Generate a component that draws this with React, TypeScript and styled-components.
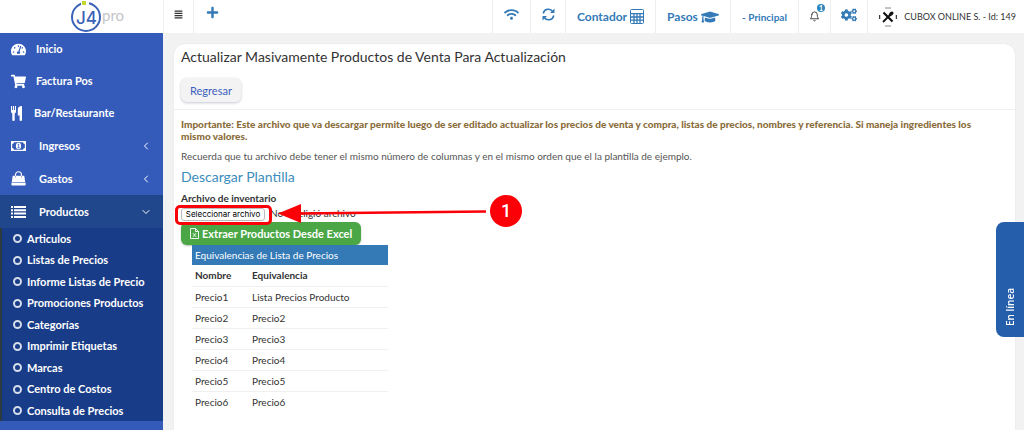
import React, { useRef } from "react";
import styled, { createGlobalStyle } from "styled-components";
import { FaWifi, FaGraduationCap, FaCogs, FaShoppingCart, FaTachometerAlt, FaAlignJustify, FaPlus, FaStar } from "react-icons/fa";
import { LuChevronLeft, LuChevronDown, LuBell } from "react-icons/lu";

const GlobalStyle = createGlobalStyle`
  *, *::before, *::after { box-sizing: border-box; }
  body {
    margin: 0;
    background: #f2f2f2;
    color: #333;
    font-family: Lato, "Noto Sans", sans-serif;
    font-size: 10px;
    line-height: 12px;
  }
  button, input { font-family: inherit; }
  h1, h2, p, ul { margin: 0; padding: 0; }
  ul { list-style: none; }
  a { text-decoration: none; color: inherit; }
`;

const Page = styled.div`
  display: grid;
  grid-template-columns: 163px minmax(0, 1fr);
  grid-template-rows: 33px minmax(0, 1fr);
  height: 100vh;
  overflow: hidden;
`;

const Brand = styled.a`
  display: flex;
  align-items: center;
  justify-content: center;
  background: #fff;
  padding-left: 32px;
`;

const TopBar = styled.header`
  display: flex;
  align-items: stretch;
  background: #fff;
  border-left: 1px solid #efefef;
`;

const Spacer = styled.div`
  flex: 1;
`;

const BarItem = styled.button<{ $width: number; $dark?: boolean }>`
  position: relative;
  display: flex;
  align-items: center;
  justify-content: center;
  gap: 3px;
  width: ${(p) => p.$width}px;
  padding: 0 0 4px;
  border: 0;
  border-left: 1px solid #eee;
  background: #fff;
  color: ${(p) => (p.$dark ? "#333" : "#337ab7")};
  font-size: 12px;
  font-weight: 700;
  white-space: nowrap;
`;

const FlatItem = styled(BarItem)`
  border-left: 0;
`;

const PlusItem = styled(BarItem)`
  justify-content: flex-start;
  padding: 0 0 8px 12px;
`;

const TextItem = styled(BarItem)`
  padding: 0;
`;

const SmallItem = styled(TextItem)`
  font-size: 10px;
`;

const UserItem = styled(TextItem)`
  justify-content: flex-end;
  gap: 7px;
  padding-right: 8px;
  font-size: 9px;
  font-weight: 400;
`;

const Badge = styled.span`
  position: absolute;
  top: 4px;
  right: 5px;
  width: 8px;
  height: 8px;
  border-radius: 4px;
  background: #2f86bd;
  color: #fff;
  font-size: 7px;
  line-height: 8px;
  text-align: center;
`;

const Sidebar = styled.nav`
  background: #345bb9;
  color: #fff;
  font-weight: 700;
  overflow: hidden;
`;

const MenuLink = styled.a<{ $active?: boolean; $tree?: boolean }>`
  display: flex;
  align-items: center;
  gap: ${(p) => (p.$tree ? 13 : 10)}px;
  height: ${(p) => (p.$tree ? 33 : 32)}px;
  padding: 0 11px;
  background: ${(p) => (p.$active ? "#20468c" : "transparent")};
  font-size: 11px;

  svg { flex: none; }
  svg:last-child:not(:first-child) { margin-left: auto; }
`;

const Submenu = styled.ul`
  background: #183c87;
  border-left: 2px solid #2c3b41;
`;

const SubItem = styled.li`
  height: 21px;
  &:nth-child(even) { height: 22px; }
`;

const SubLink = styled.a`
  display: flex;
  align-items: center;
  gap: 5px;
  height: 100%;
  padding-left: 11px;
  font-size: 11px;
  line-height: 20px;

  &::before {
    content: "";
    width: 9px;
    height: 9px;
    border: 2px solid #d5dcea;
    border-radius: 50%;
  }
`;

const Main = styled.main`
  padding: 11px 9px 0 11px;
  display: flex;
`;

const Card = styled.section`
  flex: 1;
  background: #fff;
  border-radius: 10px 10px 0 0;
  box-shadow: 0 0 1px #ccc;
`;

const CardHead = styled.div`
  padding: 4px 7px 7px;
  border-bottom: 1px solid #f0f0f0;
`;

const Title = styled.h1`
  margin-bottom: 12px;
  font-size: 14px;
  line-height: 18px;
  font-weight: 400;
`;

const BackButton = styled.button`
  display: block;
  height: 24px;
  padding: 0 9px;
  border: 0;
  border-radius: 6px;
  background: #f3f3f3;
  box-shadow: 0 1px 3px #c4c8d4;
  color: #3b5fbf;
  font-size: 11px;
`;

const CardBody = styled.div`
  padding: 8px 7px;
`;

const Warning = styled.p`
  color: #8a6d3b;
  font-weight: 900;
  line-height: 12px;
  padding-right: 10px;
`;

const Note = styled.p`
  margin-top: 8px;
  color: #555;
`;

const TemplateLink = styled.a`
  display: block;
  margin-top: 6px;
  color: #3c8dbc;
  font-size: 14px;
  line-height: 18px;
`;

const FieldLabel = styled.label`
  display: block;
  margin-top: 6px;
  font-weight: 700;
`;

const FilePicker = styled.div`
  position: relative;
  display: flex;
  align-items: center;
  gap: 5px;
  height: 18px;

  input { display: none; }
`;

const PickButton = styled.button`
  width: 84px;
  height: 13px;
  margin-top: 3px;
  padding: 0;
  border: 1px solid #bbb;
  border-radius: 3px;
  background: #fff;
  font-family: Inter, sans-serif;
  font-size: 8px;
  line-height: 11px;
  white-space: nowrap;
`;

const Highlight = styled.span`
  position: absolute;
  left: -6px;
  top: 1px;
  width: 97px;
  height: 20px;
  border: 3px solid #fb0007;
  border-radius: 5px;
  pointer-events: none;
`;

const Arrow = styled.svg`
  position: absolute;
  left: 97px;
  top: 0;
  pointer-events: none;
`;

const Step = styled.span`
  position: absolute;
  left: 309px;
  top: -9px;
  width: 32px;
  height: 32px;
  border-radius: 50%;
  background: #fb0007;
  color: #fff;
  font-family: Roboto, sans-serif;
  font-size: 18px;
  font-weight: 500;
  line-height: 32px;
  text-align: center;
`;

const ExtractButton = styled.button`
  display: flex;
  align-items: center;
  gap: 3px;
  height: 23px;
  padding: 0 9px;
  border: 0;
  border-radius: 6px;
  background: #4ba746;
  box-shadow: 0 1px 2px #b5c4b5;
  color: #fff;
  font-size: 11px;
  font-weight: 700;
  white-space: nowrap;
`;

const PriceTable = styled.table`
  width: 196px;
  margin-left: 11px;
  border-collapse: collapse;

  th, td {
    height: 21px;
    padding: 0 3px;
    border-bottom: 1px solid #f0f0f0;
    text-align: left;
  }
  th:first-child, td:first-child { width: 57px; }
  tr:last-child td { border-bottom: 0; }
  caption {
    padding: 0 3px;
    background: #337ab7;
    color: #fff;
    line-height: 20px;
    text-align: left;
  }
`;

const OnlineTab = styled.button`
  position: fixed;
  right: 0;
  top: 222px;
  width: 28px;
  height: 115px;
  padding: 11px 0 0;
  border: 0;
  border-radius: 0 8px 8px 0;
  background: #255eab;
  color: #fff;
  font-family: "Open Sans", sans-serif;
  font-size: 10px;
  font-weight: 600;
  writing-mode: vertical-rl;
  transform: rotate(180deg);
  text-align: left;
`;

const Logo = () => (
  <svg width="58" height="33" viewBox="0 0 58 33" role="img">
    <circle cx="17" cy="17" r="14" fill="none" stroke="#3b62b9" strokeWidth="2" />
    <rect x="12" y="1" width="8" height="4" fill="#fff" />
    <rect x="13" y="1" width="4" height="4" fill="#c3d82d" />
    <text x="7" y="24" fill="#3b62b9" fontFamily="Inter, sans-serif" fontSize="17" fontWeight="500">J4</text>
    <text x="33" y="21" fill="#c4c5c9" fontFamily="Lato, sans-serif" fontSize="15">pro</text>
  </svg>
);

const Refresh = () => (
  <svg width="13" height="13" viewBox="0 0 26 26" fill="none" stroke="currentColor" strokeWidth="3">
    <path d="M2.500 11A10.500 10.500 0 0 1 21.500 7M23.500 15A10.500 10.500 0 0 1 4.500 19" />
    <path d="M25 1v9h-9zM1 25v-9h9z" fill="currentColor" stroke="none" />
  </svg>
);

const Calculator = () => (
  <svg width="14" height="15" viewBox="0 0 14 15">
    <rect x="0.500" y="0.500" width="13" height="14" rx="1" fill="#fff" stroke="currentColor" />
    <path d="M1 4.700h12M1 8h12M1 11.200h12M4 5v9M7 5v9M10 5v9" stroke="currentColor" strokeWidth="1.300" />
  </svg>
);

const Crossed = () => (
  <svg width="18" height="20" viewBox="0 0 18 20" fill="none" stroke="#111">
    <path d="M.7 8v4M17.300 8v4" />
    <path d="M6 1h6M6 19h6" stroke="#888" />
    <path d="M4.500 5.500l9 9" strokeWidth="2.200" />
    <path d="M4 15l7-7" strokeWidth="1.800" />
    <ellipse cx="12.200" cy="6.800" rx="2.700" ry="1.800" transform="rotate(-45 12.200 6.800)" fill="#111" stroke="none" />
  </svg>
);

const Cutlery = () => (
  <svg width="13" height="15" viewBox="0 0 13 15" fill="#fff">
    <path d="M0 0h1v4h.9V0h1.200v4H4V0h1v5.500Q5 7 3.700 7.400V14q0 1-1.200 1T1.300 14V7.400Q0 7 0 5.500z" />
    <path d="M11 0v14q0 1-1.200 1T8.600 14V9.500H6.800V3.500Q6.800 0 11 0z" />
  </svg>
);

const Money = () => (
  <svg width="15" height="10" viewBox="0 0 15 10">
    <rect x="0" y="0" width="15" height="10" fill="#fff" />
    <path d="M3 1.200h9a2 2 0 0 0 1.800 1.800v4A2 2 0 0 0 12 8.800H3A2 2 0 0 0 1.200 7V3A2 2 0 0 0 3 1.200z" fill="#345bb9" />
    <ellipse cx="7.500" cy="5" rx="2.600" ry="3.200" fill="#fff" />
    <path d="M6.700 3.600l1-.5v3.700M6.500 6.800h2.200" fill="none" stroke="#345bb9" strokeWidth=".8" />
  </svg>
);

const Bag = () => (
  <svg width="15" height="15" viewBox="0 0 15 15">
    <path d="M4.500 6V3.700a3 3 0 0 1 6 0V6" fill="none" stroke="#fff" strokeWidth="1.100" />
    <path d="M1.700 4.800h11.600l.9 6.500H.8z" fill="#fff" />
    <path d="M.6 11.300h13.800l.3 2.400q0 .8-.8.8H1.200q-.8 0-.8-.8z" fill="#fff" />
    <path d="M4.500 4.800v1.700M10.500 4.800v1.700M.8 11.500h13.400" stroke="#345bb9" strokeWidth=".5" />
  </svg>
);

const ListIcon = () => (
  <svg width="15" height="12" viewBox="0 0 15 12" fill="#fff">
    <path d="M0 0h2v2H0zM3 0h12v2H3zM0 3.300h2v2H0zM3 3.300h12v2H3zM0 6.600h2v2H0zM3 6.600h12v2H3zM0 9.900h2v2H0zM3 9.900h12v2H3z" />
  </svg>
);

const ExcelFile = () => (
  <svg width="9" height="11" viewBox="0 0 9 11" fill="none" stroke="#fff">
    <path d="M.5 .5h5l3 3v7h-8zM5.500 .5v3h3" strokeWidth=".9" />
    <path d="M3 5.200l3 3.600M6 5.200l-3 3.600" strokeWidth=".9" />
  </svg>
);

const subItems = ["Articulos", "Listas de Precios", "Informe Listas de Precio", "Promociones Productos", "Categorías", "Imprimir Etiquetas", "Marcas", "Centro de Costos", "Consulta de Precios"];

const prices = [
  ["Precio1", "Lista Precios Producto"],
  ["Precio2", "Precio2"],
  ["Precio3", "Precio3"],
  ["Precio4", "Precio4"],
  ["Precio5", "Precio5"],
  ["Precio6", "Precio6"],
];

export default function App() {
  const fileRef = useRef<HTMLInputElement>(null);
  return (
    <>
      <GlobalStyle />
      <Page>
        <Brand href="#"><Logo /></Brand>
        <TopBar>
          <FlatItem $width={29} $dark><FaAlignJustify size={9} /></FlatItem>
          <PlusItem $width={37}><FaPlus size={13} /></PlusItem>
          <Spacer />
          <BarItem $width={38}><FaWifi size={15} /></BarItem>
          <BarItem $width={35}><Refresh /></BarItem>
          <TextItem $width={90}>Contador <Calculator /></TextItem>
          <TextItem $width={75}>Pasos <FaGraduationCap size={18} /></TextItem>
          <SmallItem $width={68}>- Principal</SmallItem>
          <TextItem $width={32} $dark><LuBell size={11} /><Badge>1</Badge></TextItem>
          <BarItem $width={37}><FaCogs size={16} /></BarItem>
          <UserItem $width={157} $dark><Crossed />CUBOX ONLINE S. - Id: 149</UserItem>
        </TopBar>
        <Sidebar>
          <MenuLink href="#"><FaTachometerAlt size={15} />Inicio</MenuLink>
          <MenuLink href="#"><FaShoppingCart size={15} />Factura Pos</MenuLink>
          <MenuLink href="#"><Cutlery />Bar/Restaurante</MenuLink>
          <MenuLink href="#" $tree><Money />Ingresos<LuChevronLeft size={12} /></MenuLink>
          <MenuLink href="#" $tree><Bag />Gastos<LuChevronLeft size={12} /></MenuLink>
          <MenuLink href="#" $tree $active><ListIcon />Productos<LuChevronDown size={12} /></MenuLink>
          <Submenu>
            {subItems.map((t) => (
              <SubItem key={t}><SubLink href="#">{t}</SubLink></SubItem>
            ))}
          </Submenu>
          <MenuLink href="#" $tree><FaStar size={17} /></MenuLink>
        </Sidebar>
        <Main>
          <Card>
            <CardHead>
              <Title>Actualizar Masivamente Productos de Venta Para Actualización</Title>
              <BackButton>Regresar</BackButton>
            </CardHead>
            <CardBody>
              <Warning>Importante: Este archivo que va descargar permite luego de ser editado actualizar los precios de venta y compra, listas de precios, nombres y referencia. Si maneja ingredientes los mismo valores.</Warning>
              <Note>Recuerda que tu archivo debe tener el mismo número de columnas y en el mismo orden que el la plantilla de ejemplo.</Note>
              <TemplateLink href="#">Descargar Plantilla</TemplateLink>
              <FieldLabel htmlFor="inventario">Archivo de inventario</FieldLabel>
              <FilePicker>
                <input id="inventario" type="file" ref={fileRef} />
                <PickButton type="button" onClick={() => fileRef.current?.click()}>Seleccionar archivo</PickButton>
                <span>No se eligió archivo</span>
                <Highlight />
                <Arrow width="214" height="20" viewBox="0 0 214 20">
                  <path d="M20 9.500L208 7.500" stroke="#fb0007" strokeWidth="2.600" />
                  <path d="M0 9.500L23 0v19z" fill="#fb0007" />
                </Arrow>
                <Step>1</Step>
              </FilePicker>
              <ExtractButton><ExcelFile />Extraer Productos Desde Excel</ExtractButton>
              <PriceTable>
                <caption>Equivalencias de Lista de Precios</caption>
                <thead><tr><th>Nombre</th><th>Equivalencia</th></tr></thead>
                <tbody>
                  {prices.map(([a, b]) => (
                    <tr key={a}><td>{a}</td><td>{b}</td></tr>
                  ))}
                </tbody>
              </PriceTable>
            </CardBody>
          </Card>
        </Main>
      </Page>
      <OnlineTab>En línea</OnlineTab>
    </>
  );
}
